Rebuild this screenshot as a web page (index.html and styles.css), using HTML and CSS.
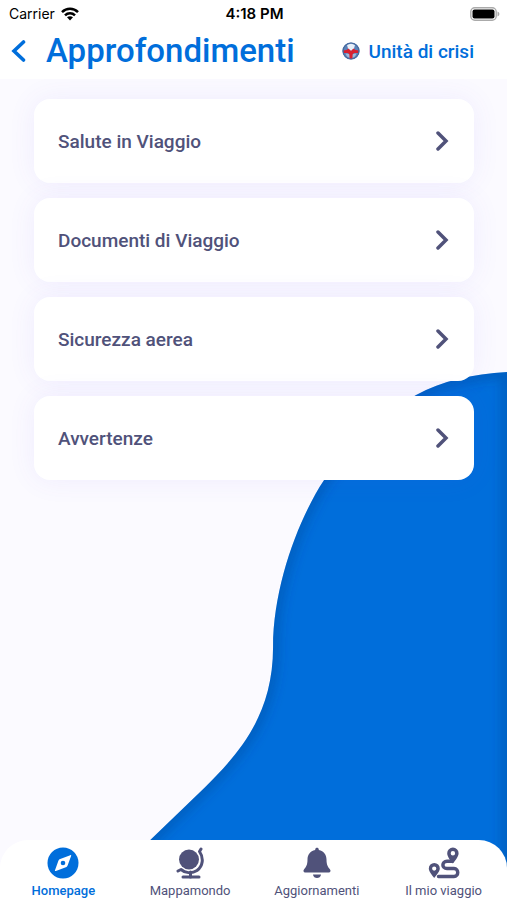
FILE: index.html
```html
<!DOCTYPE html>
<html lang="it">
<head>
  <meta charset="UTF-8">
  <meta name="viewport" content="width=device-width, initial-scale=1">
  <title>Approfondimenti</title>
  <link rel="stylesheet" href="styles.css">
</head>
<body>
  <header class="header">
    <div class="status-bar">
      <span class="carrier">Carrier
        <svg width="18" height="14" viewBox="0 0 18 14" aria-hidden="true">
          <g fill="none" stroke="#000" stroke-width="2.5">
            <path d="M1 5.2C5.5 .7 12.5 .7 17 5.2"/>
            <path d="M4 8.3C6.8 5.5 11.2 5.5 14 8.3"/>
          </g>
          <path d="M6 10.3C7.7 8.8 10.3 8.8 12 10.3L9 13.5Z"/>
        </svg>
      </span>
      <span class="time">4:18 PM</span>
      <svg class="battery" width="30" height="14" viewBox="0 0 30 14" aria-hidden="true">
        <rect x=".8" y=".8" width="25.4" height="12.4" rx="4" fill="#fff" stroke="#aaa" stroke-width="1.4"/>
        <rect x="2.5" y="2.5" width="22" height="9" rx="2"/>
        <path d="M27.5 4.5C30 5.3 30 8.7 27.5 9.5Z" fill="#aaa"/>
      </svg>
    </div>
    <div class="title-bar">
      <button class="back-btn" aria-label="Indietro">
        <svg width="16" height="24" viewBox="0 0 16 24" aria-hidden="true">
          <path d="M13.5 3L4 12L13.5 21" fill="none" stroke="currentColor" stroke-width="3.6" stroke-linecap="round" stroke-linejoin="miter"/>
        </svg>
      </button>
      <h1>Approfondimenti</h1>
      <a class="crisis-link" href="#">
        <svg width="18" height="18" viewBox="0 0 18 18" aria-hidden="true">
          <circle cx="9" cy="9" r="8.5" fill="#5b82b8"/>
          <path d="M5 3L9 1.5L13 3L12 6.5L9 9L6 6.5Z" fill="#e8eff9"/>
          <path d="M3.5 11.5L7.5 12L8 16L5 14.5ZM14.5 11.5L10.5 12L10 16L13 14.5Z" fill="#a3b8d6"/>
          <path d="M1 8.5L4.500 8L6.500 6.500L9 9L11.500 6.500L13.500 8L17 8.500L16.500 11L12 11L10.500 12.500V17H7.500V12.500L6 11L1.500 11Z" fill="#d8202f"/>
          <circle cx="9" cy="9" r="8" fill="none" stroke="#46689d" stroke-width="1.2"/>
        </svg>
        Unità di crisi
      </a>
    </div>
  </header>

  <main class="content">
    <svg class="blob" viewBox="0 0 375 528" aria-hidden="true">
      <defs>
        <path id="blob-shape" d="M375 0C340 2 310 9 284 23C245 45 215 73 192 108C168 144 141 212 141 275C141 345 105 383 73 415L18 468C5 482 0 500 0 528H375Z"/>
        <clipPath id="blob-clip"><use href="#blob-shape"/></clipPath>
        <filter id="soft" x="-10%" y="-10%" width="120%" height="120%"><feGaussianBlur stdDeviation="6"/></filter>
      </defs>
      <use href="#blob-shape" fill="#006edb"/>
      <g clip-path="url(#blob-clip)">
        <use href="#blob-shape" fill="none" stroke="#003f88" stroke-opacity=".4" stroke-width="10" filter="url(#soft)"/>
      </g>
    </svg>
    <ul class="list">
      <li><a class="card" href="#">Salute in Viaggio
        <svg width="16" height="20" viewBox="0 0 16 20" aria-hidden="true"><path d="M4 2L12 10L4 18"/></svg></a></li>
      <li><a class="card" href="#">Documenti di Viaggio
        <svg width="16" height="20" viewBox="0 0 16 20" aria-hidden="true"><path d="M4 2L12 10L4 18"/></svg></a></li>
      <li><a class="card" href="#">Sicurezza aerea
        <svg width="16" height="20" viewBox="0 0 16 20" aria-hidden="true"><path d="M4 2L12 10L4 18"/></svg></a></li>
      <li><a class="card" href="#">Avvertenze
        <svg width="16" height="20" viewBox="0 0 16 20" aria-hidden="true"><path d="M4 2L12 10L4 18"/></svg></a></li>
    </ul>
  </main>

  <nav class="tab-bar">
    <a class="tab active" href="#">
      <svg width="32" height="32" viewBox="0 0 32 32" aria-hidden="true">
        <circle cx="16" cy="16" r="15.5" fill="currentColor"/>
        <path d="M23.300 8.200C24 7.900 24.400 8.300 24.100 9L20.600 18.500C20.400 19 20 19.600 19.500 19.900L8.900 24C8.200 24.300 7.700 23.900 8 23.200L11.400 13.700C11.600 13.200 12 12.600 12.500 12.300Z" fill="#fff"/>
        <circle cx="16" cy="16" r="2.3" fill="currentColor"/>
      </svg>
      Homepage
    </a>
    <a class="tab" href="#">
      <svg width="32" height="32" viewBox="0 0 32 32" aria-hidden="true">
        <circle cx="15" cy="12.5" r="10" fill="currentColor"/>
        <g fill="none" stroke="currentColor" stroke-width="3" stroke-linecap="round" stroke-linejoin="round">
          <path d="M27 2L25.500 4.500C30 11 29 19 23 23.500C17.500 27 11 26 7 22.500L4 24"/>
          <path d="M16.500 25V30"/>
          <path d="M9 30H25"/>
        </g>
      </svg>
      Mappamondo
    </a>
    <a class="tab" href="#">
      <svg width="32" height="32" viewBox="0 0 32 32" aria-hidden="true">
        <path d="M14.200 3V2.500C14.200 0 17.800 0 17.800 2.500V3C23 4 25.500 8 25.500 12.500C25.500 18 27 20 28.700 22C30.200 23.700 29.500 25.500 27.500 25.500H4.500C2.500 25.500 1.800 23.700 3.300 22C5 20 6.500 18 6.500 12.500C6.500 8 9 4 14.200 3Z" fill="currentColor"/>
        <path d="M12 27.500H20C19.500 32.300 12.500 32.300 12 27.500Z" fill="currentColor"/>
      </svg>
      Aggiornamenti
    </a>
    <a class="tab" href="#">
      <svg width="32" height="32" viewBox="0 0 32 32" aria-hidden="true">
        <path fill="currentColor" fill-rule="evenodd" d="M6.200 31C4.500 28.500 .8 24.800 .8 21.500A5.500 5.500 0 0 1 11.800 21.500C11.800 24.800 8 28.500 6.200 31ZM6.200 19.500A2.100 2.100 0 1 0 6.200 23.700A2.100 2.100 0 1 0 6.200 19.500Z"/>
        <path fill="currentColor" fill-rule="evenodd" d="M24.800 16.500C23 14 19.200 10 19.200 6.200A5.700 5.700 0 0 1 30.600 6.200C30.600 10 26.600 14 24.800 16.500ZM24.900 4A2.200 2.200 0 1 0 24.900 8.400A2.200 2.200 0 1 0 24.900 4Z"/>
        <path d="M24.500 14.300H19C13.500 14.300 13.500 21.500 19 21.500H26C31 21.500 31 29.500 26 29.500H10.500" fill="none" stroke="currentColor" stroke-width="3.4" stroke-linecap="round"/>
      </svg>
      Il mio viaggio
    </a>
  </nav>
</body>
</html>
```
FILE: styles.css
```css
* {
  box-sizing: border-box;
}

body {
  margin: 0;
  min-height: 100vh;
  display: flex;
  flex-direction: column;
  position: relative;
  overflow-x: hidden;
  background: #fbfaff;
  color: #50527a;
  font-family: Roboto, "Liberation Sans", sans-serif;
}

a {
  color: inherit;
  text-decoration: none;
}

svg {
  flex: none;
}

.header {
  position: relative;
  z-index: 2;
  background: #fff;
}

.status-bar {
  display: grid;
  grid-template-columns: 1fr auto 1fr;
  align-items: center;
  height: 27px;
  padding: 0 7px 0 9px;
  color: #000;
  font-family: Inter, sans-serif;
  font-size: 14px;
}

.carrier {
  display: flex;
  align-items: center;
  gap: 6px;
}

.time {
  font-size: 15px;
  font-weight: 600;
}

.battery {
  justify-self: end;
}

.title-bar {
  display: flex;
  align-items: center;
  height: 52px;
  padding: 0 33px 4px 10px;
  color: #006edb;
}

.back-btn {
  display: flex;
  padding: 0;
  border: none;
  background: none;
  color: inherit;
  cursor: pointer;
}

h1 {
  margin: 0 auto 0 20px;
  font-size: 33px;
  font-weight: 500;
  line-height: 40px;
}

.crisis-link {
  display: flex;
  align-items: center;
  gap: 8px;
  font-size: 19px;
  font-weight: 500;
  white-space: nowrap;
}

.content {
  flex: 1;
}

.blob {
  position: absolute;
  right: 0;
  bottom: 0;
  width: 74%;
}

.list {
  position: relative;
  display: flex;
  flex-direction: column;
  gap: 15px;
  margin: 0;
  padding: 20px 33px 20px 34px;
  list-style: none;
}

.card {
  display: flex;
  align-items: center;
  justify-content: space-between;
  height: 84px;
  padding: 0 24px;
  border-radius: 16px;
  background: #fff;
  box-shadow: 0 0 28px rgba(100, 80, 240, 0.08);
  font-size: 19px;
  font-weight: 500;
}

.card path {
  fill: none;
  stroke: currentColor;
  stroke-width: 3.5;
  stroke-linecap: round;
}

.tab-bar {
  position: relative;
  display: grid;
  grid-template-columns: repeat(4, 1fr);
  height: 60px;
  padding-top: 7px;
  border-radius: 28px 28px 0 0;
  background: #fff;
}

.tab {
  display: flex;
  flex-direction: column;
  align-items: center;
  gap: 4px;
  font-size: 13px;
  line-height: 16px;
}

.active {
  color: #006edb;
  font-weight: 500;
}
```
